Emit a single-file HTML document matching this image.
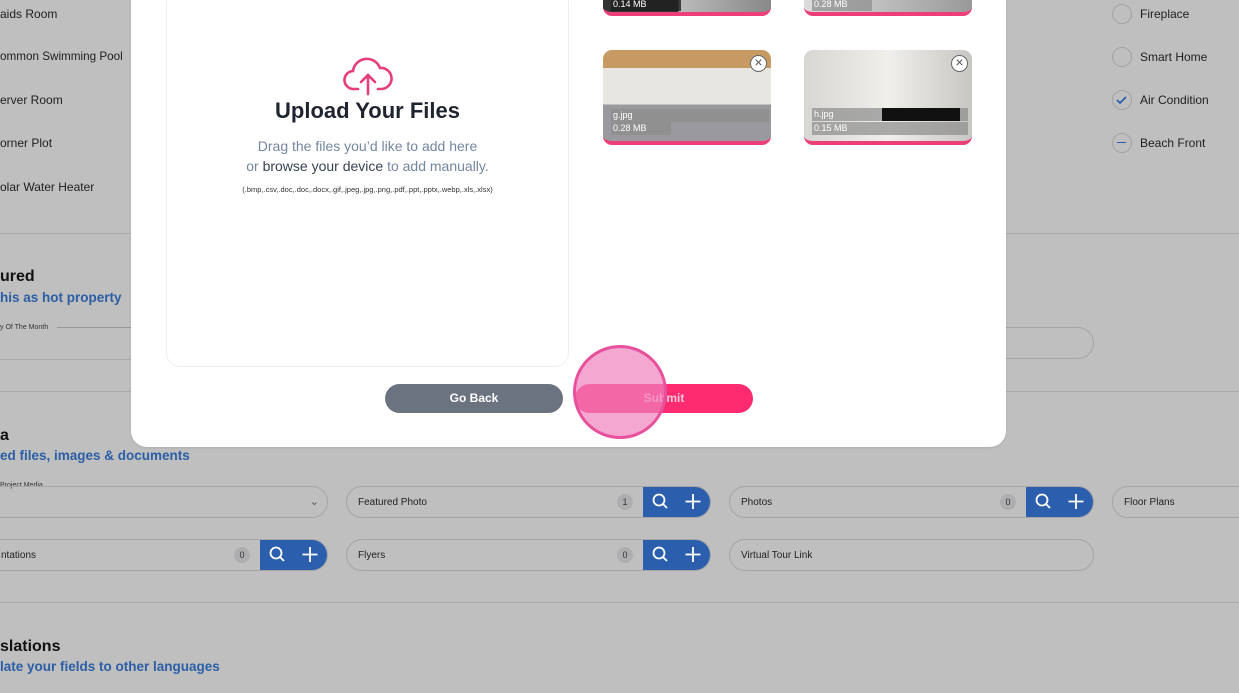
<!DOCTYPE html>
<html><head><meta charset="utf-8"><style>
*{margin:0;padding:0;box-sizing:border-box}
body{width:1239px;height:693px;overflow:hidden;background:#bfbfbf;font-family:"Liberation Sans",Arial,sans-serif;position:relative;color:#222}
.a{position:absolute;white-space:nowrap}
.t{font-size:12px;color:#1e1e1e}
.h{font-size:16px;font-weight:bold;color:#111}
.b{font-size:13.5px;font-weight:bold;color:#2b5ea6}
.line{position:absolute;height:1px;background:#a9a9a9}
.pill{position:absolute;height:32px;border:1px solid #a5a5a5;border-radius:16px;font-size:10px;color:#222;padding-left:11px;line-height:31px;overflow:hidden}
.cnt{position:absolute;top:7px;width:16px;height:16px;border-radius:8px;background:#aeaeb0;font-size:9px;text-align:center;line-height:16px;color:#333}
.btns{position:absolute;top:-1px;right:-1px;width:68px;height:32px;background:#2b5fae;border-radius:0 16px 16px 0}
.chk{position:absolute;width:20px;height:20px;border:1.5px solid #a3a3a3;border-radius:50%}
.card{position:absolute;width:168px;height:95px;border-radius:9px;overflow:hidden;border-bottom:4px solid #ec3f78}
.lbl{position:absolute;left:8px;height:13px;background:rgba(140,140,140,.7);color:#fff;font-size:9px;line-height:13px;padding-left:2px}
.x{position:absolute;right:4px;top:5px;width:17px;height:17px;border-radius:50%;background:#fff;border:1.5px solid #666;color:#555;font-size:14px;line-height:13px;text-align:center}
</style></head><body>
<div class="a t" style="left:0;top:7px">aids Room</div>
<div class="a t" style="left:0;top:50px;font-size:11.7px">ommon Swimming Pool</div>
<div class="a t" style="left:0;top:93px">erver Room</div>
<div class="a t" style="left:0;top:136px">orner Plot</div>
<div class="a t" style="left:0;top:180px">olar Water Heater</div>
<div class="chk" style="left:1112px;top:4px"></div><div class="a t" style="left:1140px;top:7px">Fireplace</div>
<div class="chk" style="left:1112px;top:47px"></div><div class="a t" style="left:1140px;top:50px">Smart Home</div>
<div class="chk" style="left:1112px;top:90px"><svg width="17" height="17" viewBox="0 0 17 17" style="position:absolute;left:0;top:0"><path d="M4 9l3 3 6-6" stroke="#2b5fae" stroke-width="1.8" fill="none"/></svg></div><div class="a t" style="left:1140px;top:93px">Air Condition</div>
<div class="chk" style="left:1112px;top:133px"><div style="position:absolute;left:4px;top:7.5px;width:9px;height:1.5px;background:#2b5fae"></div></div><div class="a t" style="left:1140px;top:136px">Beach Front</div>
<div class="line" style="left:0;top:233px;width:1239px"></div>
<div class="a h" style="left:0;top:268px">ured</div>
<div class="a b" style="left:0;top:290px">his as hot property</div>
<div class="a" style="left:0;top:324px;font-size:7px;color:#333">y Of The Month</div>
<div class="line" style="left:57px;top:327px;width:80px;background:#999"></div>
<div class="line" style="left:0;top:359px;width:135px"></div>
<div class="pill" style="left:990px;top:327px;width:104px;border-left:none;border-radius:0 16px 16px 0"></div>
<div class="line" style="left:0;top:391px;width:1239px"></div>
<div class="a h" style="left:0;top:427px">a</div>
<div class="a b" style="left:0;top:448px">ed files, images &amp; documents</div>
<div class="a" style="left:0;top:482px;font-size:7px;color:#333">Project Media</div>
<div class="pill" style="left:-20px;top:486px;width:348px;border-left:none"><span style="position:absolute;right:8px;top:0;font-size:11px;color:#555">&#8964;</span></div>
<div class="pill" style="left:346px;top:486px;width:365px">Featured Photo<div class="cnt" style="right:77px">1</div><div class="btns"></div></div>
<div class="pill" style="left:729px;top:486px;width:365px">Photos<div class="cnt" style="right:77px">0</div><div class="btns"></div></div>
<div class="pill" style="left:1112px;top:486px;width:160px">Floor Plans</div>
<div class="pill" style="left:-20px;top:539px;width:348px;padding-left:20px">ntations<div class="cnt" style="right:77px">0</div><div class="btns"></div></div>
<div class="pill" style="left:346px;top:539px;width:365px">Flyers<div class="cnt" style="right:77px">0</div><div class="btns"></div></div>
<div class="pill" style="left:729px;top:539px;width:365px">Virtual Tour Link</div>
<div class="line" style="left:0;top:602px;width:1239px"></div>
<div class="a h" style="left:0;top:638px">slations</div>
<div class="a b" style="left:0;top:659px">late your fields to other languages</div>

<svg class="a" style="left:0;top:0" width="1239" height="693">
<g stroke="#fff" stroke-width="1.8" fill="none">
<g transform="translate(652,493)"><circle cx="7" cy="7" r="5.5"/><path d="M11 11l4 4"/><path d="M41 1v15M33.5 8.5h15"/></g>
<g transform="translate(1035,493)"><circle cx="7" cy="7" r="5.5"/><path d="M11 11l4 4"/><path d="M41 1v15M33.5 8.5h15"/></g>
<g transform="translate(269,546)"><circle cx="7" cy="7" r="5.5"/><path d="M11 11l4 4"/><path d="M41 1v15M33.5 8.5h15"/></g>
<g transform="translate(652,546)"><circle cx="7" cy="7" r="5.5"/><path d="M11 11l4 4"/><path d="M41 1v15M33.5 8.5h15"/></g>
</g></svg>

<div class="a" style="left:131px;top:-20px;width:875px;height:467px;background:#fff;border-radius:0 0 16px 16px;box-shadow:0 1px 2px rgba(0,0,0,.1)"></div>
<div class="a" style="left:166px;top:-10px;width:403px;height:377px;border:1px solid #eee;border-radius:14px"></div>
<svg class="a" style="left:342px;top:56px" width="52" height="40" viewBox="0 0 52 40"><path d="M16 33H12A9 9 0 0 1 11 15 14 14 0 0 1 38 12 10 10 0 0 1 40 33H36" stroke="#e63d7b" stroke-width="2.6" fill="none" stroke-linecap="round"/><path d="M26 38V20M19 26l7-7 7 7" stroke="#e63d7b" stroke-width="2.6" fill="none" stroke-linecap="round"/></svg>
<div class="a" style="left:166px;top:98px;width:403px;text-align:center;font-size:22px;font-weight:bold;color:#1f2430">Upload Your Files</div>
<div class="a" style="left:166px;top:136px;width:403px;text-align:center;font-size:14px;color:#7486a0;line-height:20px">Drag the files you’d like to add here<br>or <span style="color:#3a4152">browse your device</span> to add manually.</div>
<div class="a" style="left:166px;top:185px;width:403px;text-align:center;font-size:7.5px;color:#333">(.bmp,.csv,.doc,.doc,.docx,.gif,.jpeg,.jpg,.png,.pdf,.ppt,.pptx,.webp,.xls,.xlsx)</div>

<div class="card" style="left:603px;top:-79px;background:linear-gradient(90deg,#333 0 45%,#bbb 45%,#888)"><div class="lbl" style="top:77px;width:70px;background:rgba(30,30,30,.8)">0.14 MB</div></div>
<div class="card" style="left:804px;top:-79px;background:linear-gradient(90deg,#ddd,#999)"><div class="lbl" style="top:77px;width:60px">0.28 MB</div></div>
<div class="card" style="left:603px;top:50px;background:linear-gradient(180deg,#c79a63 0 20%,#e8e6e0 20% 60%,#9a9a9e 60%)"><div class="x">×</div><div class="lbl" style="top:59px;width:158px">g.jpg</div><div class="lbl" style="top:72px;width:60px">0.28 MB</div></div>
<div class="card" style="left:804px;top:50px;background:linear-gradient(90deg,#d8d6d2,#f0efec 50%,#c8c6c2)"><div class="x">×</div><div class="lbl" style="top:58px;width:156px">h.jpg<span style="position:absolute;left:70px;top:0;width:78px;height:13px;background:#111"></span></div><div class="lbl" style="top:72px;width:156px">0.15 MB</div></div>

<div class="a" style="left:385px;top:384px;width:178px;height:29px;border-radius:15px;background:#6b7280;color:#fff;font-weight:bold;font-size:12px;text-align:center;line-height:29px">Go Back</div>
<div class="a" style="left:575px;top:384px;width:178px;height:29px;border-radius:15px;background:#ff2a70;color:#f3c8d9;font-weight:bold;font-size:12px;text-align:center;line-height:29px">Submit</div>
<div class="a" style="left:573px;top:345px;width:94px;height:94px;border-radius:50%;background:rgba(240,130,190,.7);border:3px solid #e8509c"></div>
</body></html>
